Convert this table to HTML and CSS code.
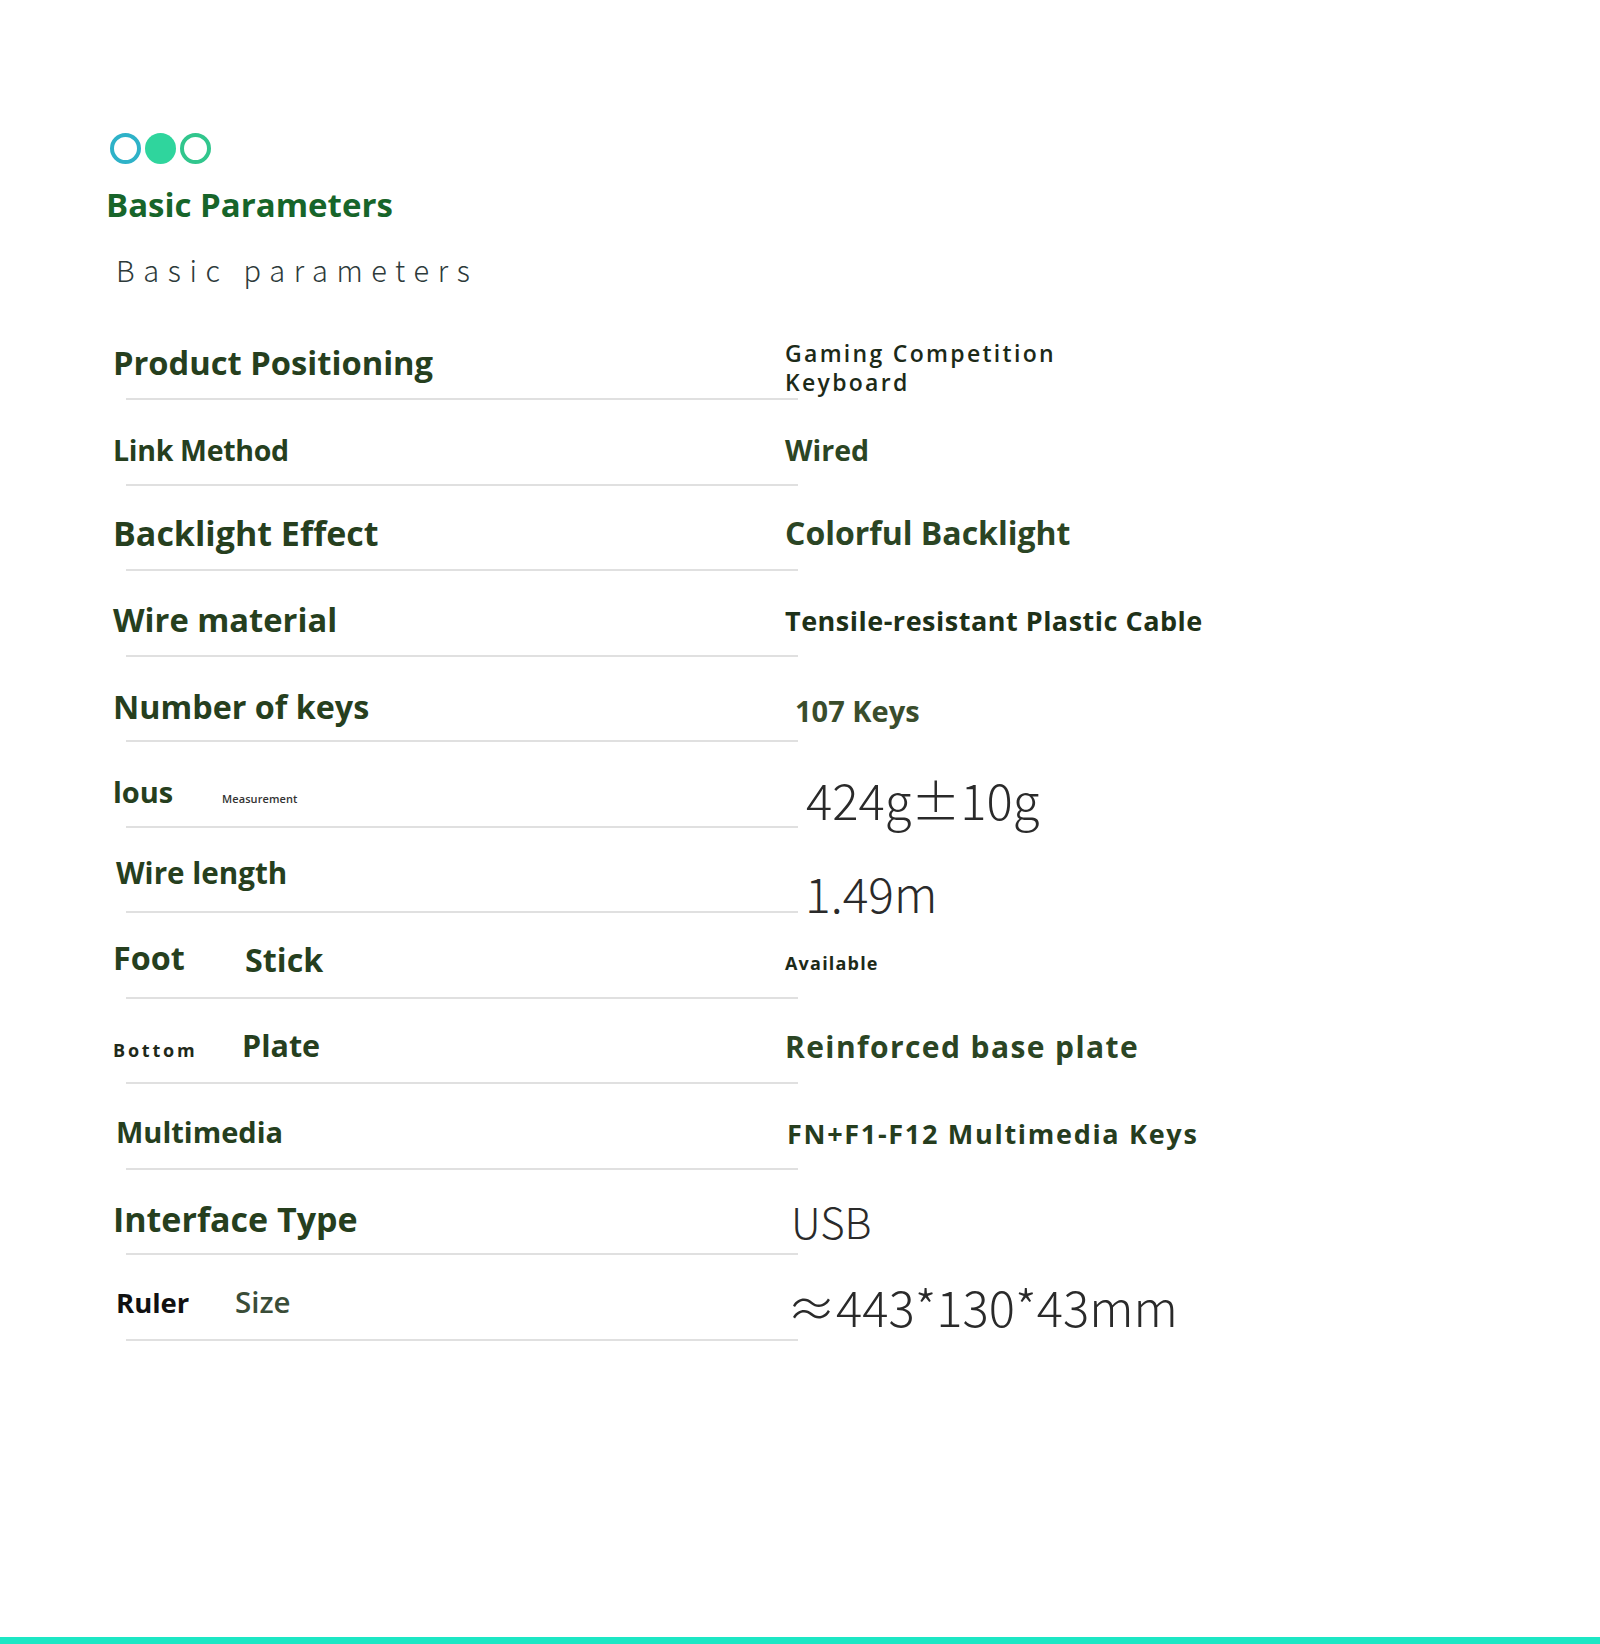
FILE: index.html
```html
<!DOCTYPE html>
<html lang="en">
<head>
<meta charset="utf-8">
<title>Basic Parameters</title>
<link rel="stylesheet" href="styles.css">
</head>
<body>
<div class="page">
  <header class="head">
    <div class="dots">
      <span class="dot dot-a"></span>
      <span class="dot dot-b"></span>
      <span class="dot dot-c"></span>
    </div>
    <h1 class="title">Basic Parameters</h1>
    <p class="subtitle">Basic parameters</p>
  </header>

  <section class="table">
    <div class="row r1">
      <div class="lbl l-pp">Product Positioning</div>
      <div class="val v-two">Gaming Competition<br>Keyboard</div>
    </div>
    <div class="row r2">
      <div class="lbl l-link">Link Method</div>
      <div class="val v-wired">Wired</div>
    </div>
    <div class="row r3">
      <div class="lbl l-xl">Backlight Effect</div>
      <div class="val v-lg">Colorful Backlight</div>
    </div>
    <div class="row r4">
      <div class="lbl l-pp">Wire material</div>
      <div class="val v-spaced">Tensile-resistant Plastic Cable</div>
    </div>
    <div class="row r5">
      <div class="lbl l-lg">Number of keys</div>
      <div class="val v-keys">107 Keys</div>
    </div>
    <div class="row r6">
      <div class="lbl l-md split"><span class="first f-lous">lous</span><span class="tiny">Measurement</span></div>
      <div class="val v-light v-weight">424g±10g</div>
    </div>
    <div class="row r7">
      <div class="lbl l-wl shift">Wire length</div>
      <div class="val v-light v-len">1.49m</div>
    </div>
    <div class="row r8">
      <div class="lbl l-lg split"><span class="first f-foot">Foot</span><span class="stick">Stick</span></div>
      <div class="val v-small">Available</div>
    </div>
    <div class="row r9">
      <div class="lbl l-plate split"><span class="first f-bottom small-spaced">Bottom</span><span>Plate</span></div>
      <div class="val v-md">Reinforced base plate</div>
    </div>
    <div class="row r10">
      <div class="lbl l-md shift">Multimedia</div>
      <div class="val v-fn">FN+F1-F12 Multimedia Keys</div>
    </div>
    <div class="row r11">
      <div class="lbl l-xl">Interface Type</div>
      <div class="val v-light v-usb">USB</div>
    </div>
    <div class="row r12">
      <div class="lbl l-sm split shift"><span class="first f-ruler ruler">Ruler</span><span class="size">Size</span></div>
      <div class="val v-light v-dim">≈443*130*43mm</div>
    </div>
  </section>

  <div class="bottom-bar"></div>
</div>
</body>
</html>
```

FILE: styles.css
```css
* { box-sizing: border-box; }

html, body {
  margin: 0;
  padding: 0;
  background: #ffffff;
}

body {
  font-family: "Open Sans", "Noto Sans", sans-serif;
  color: #2a4222;
}

.page {
  width: 1600px;
  min-height: 1644px;
  display: flex;
  flex-direction: column;
}

/* ---------- header ---------- */
.head {
  padding: 133px 0 0 110px;
}

.dots {
  display: flex;
  gap: 4px;
}

.dot {
  width: 31px;
  height: 31px;
  border-radius: 50%;
}

.dot-a { border: 4px solid #2eb2c8; }
.dot-b { background: #2fd59d; }
.dot-c { border: 4px solid #31c68d; }

.title {
  margin: 24px 0 0 -4px;
  font-family: "Open Sans", sans-serif;
  font-weight: 700;
  font-size: 33px;
  line-height: 1;
  color: #17652a;
}

.subtitle {
  margin: 34px 0 0 6px;
  font-family: "Noto Sans CJK SC", "Noto Sans", sans-serif;
  font-weight: 300;
  font-size: 29px;
  line-height: 1;
  letter-spacing: 8.6px;
  color: #2d3a3a;
}

/* ---------- table ---------- */
.table {
  margin-top: 30.5px;
}

.row {
  height: 85.5px;
  padding-left: 113px;
  display: grid;
  grid-template-columns: 672px auto;
  align-items: end;
  background: linear-gradient(#e0e0e0, #e0e0e0) no-repeat;
  background-size: 672px 2px;
  background-position: 126px 100%;
}

.lbl {
  font-family: "Open Sans", sans-serif;
  font-weight: 700;
  line-height: 1;
  color: #263f1e;
  white-space: nowrap;
}

.l-xl { font-size: 34px; }
.l-pp { font-size: 32.7px; }
.l-lg { font-size: 32.3px; }
.l-md { font-size: 29px; }
.l-wl { font-size: 29.6px; }
.l-link { font-size: 28.5px; letter-spacing: -0.3px; }
.l-plate { font-size: 30.5px; }
.l-sm { font-size: 27.5px; }

.shift { margin-left: 3px; }

.split {
  display: flex;
  align-items: baseline;
}

.first { display: inline-block; }
.f-lous { width: 109px; }
.f-foot { width: 132px; }
.f-bottom { width: 129px; }
.f-ruler { width: 119px; }

.stick { position: relative; top: 2px; }

.tiny {
  font-size: 11px;
  font-weight: 600;
  letter-spacing: 0.1px;
  color: #333;
}

.small-spaced {
  font-size: 18px;
  letter-spacing: 2.8px;
  color: #1f2a1a;
}

.ruler { color: #111111; }
.size { color: #3a4d38; font-weight: 600; font-size: 29.5px; }

.val {
  font-family: "Open Sans", sans-serif;
  font-weight: 700;
  line-height: 1;
  color: #2b4524;
  white-space: nowrap;
}

.v-two {
  font-size: 23px;
  font-weight: 600;
  letter-spacing: 2.3px;
  line-height: 29px;
  color: #1c2a18;
}
.v-wired { font-size: 28.5px; }
.v-lg { font-size: 32px; }
.v-spaced { font-size: 27px; letter-spacing: 0.5px; color: #1e3118; }
.v-keys { font-size: 29px; margin-left: 10px; color: #3a4d2c; }
.v-small { font-size: 18px; letter-spacing: 1.2px; color: #1c2a18; }
.v-md { font-size: 30px; letter-spacing: 1.4px; }
.v-fn { font-size: 27px; letter-spacing: 1.7px; color: #263d1e; margin-left: 2px; }

.v-light {
  font-family: "Noto Sans CJK SC", "Noto Sans", sans-serif;
  font-weight: 300;
  color: #2a2a2a;
}
.v-weight { font-size: 49px; margin-left: 21px; }
.v-len { font-size: 48px; margin-left: 20px; }
.v-usb { font-size: 42px; margin-left: 6px; }
.v-dim { font-size: 49px; margin-left: 2px; }

/* per-row vertical offsets (baseline distance above the rule) */
.r1 .lbl { margin-bottom: 20px; }
.r1 .val { margin-bottom: 3px; }
.r2 .lbl { margin-bottom: 21px; }
.r2 .val { margin-bottom: 21px; }
.r3 .lbl { margin-bottom: 21px; }
.r3 .val { margin-bottom: 22px; }
.r4 .lbl { margin-bottom: 20px; }
.r4 .val { margin-bottom: 23px; }
.r5 .lbl { margin-bottom: 20px; }
.r5 .val { margin-bottom: 17px; }
.r6 .lbl { margin-bottom: 22px; }
.r6 .val { margin-bottom: 5px; }
.r7 .lbl { margin-bottom: 25px; }
.r7 .val { margin-bottom: -3px; }
.r8 .lbl { margin-bottom: 25px; }
.r8 .val { margin-bottom: 27px; }
.r9 .lbl { margin-bottom: 24px; }
.r9 .val { margin-bottom: 22px; }
.r10 .lbl { margin-bottom: 24px; }
.r10 .val { margin-bottom: 23px; }
.r11 .lbl { margin-bottom: 19px; }
.r11 .val { margin-bottom: 13px; }
.r12 .lbl { margin-bottom: 24px; }
.r12 .val { margin-bottom: 11px; }

/* ---------- bottom bar ---------- */
.bottom-bar {
  margin-top: auto;
  height: 7px;
  background: #1ce7c4;
}
```
